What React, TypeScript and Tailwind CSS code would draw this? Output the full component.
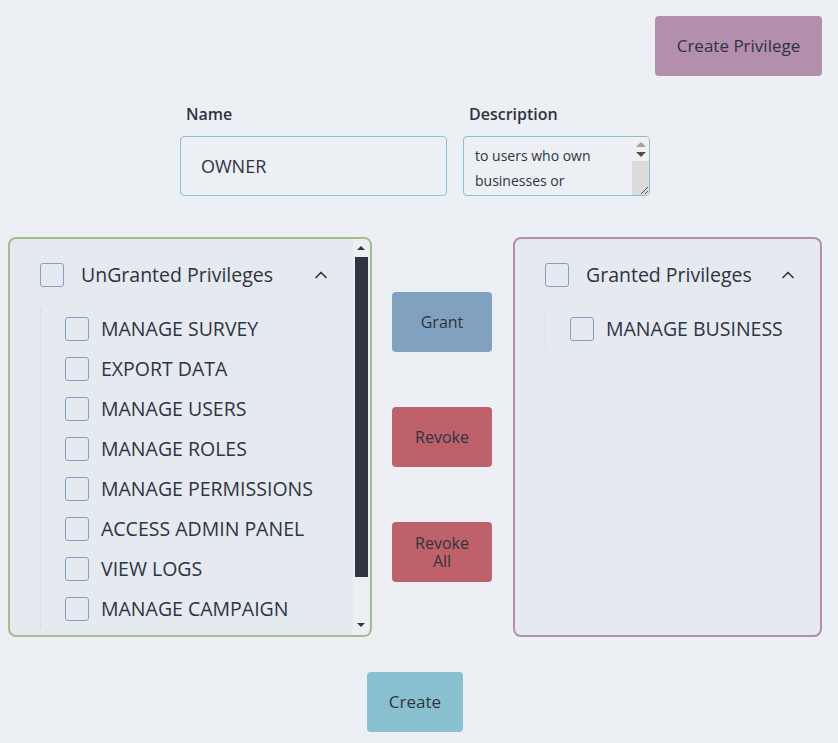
import { ChevronUp } from 'lucide-react';

const ungranted = [
  'MANAGE SURVEY',
  'EXPORT DATA',
  'MANAGE USERS',
  'MANAGE ROLES',
  'MANAGE PERMISSIONS',
  'ACCESS ADMIN PANEL',
  'VIEW LOGS',
  'MANAGE CAMPAIGN',
];

const granted = ['MANAGE BUSINESS'];

function Box() {
  return <span className="block h-6 w-6 shrink-0 rounded-[3px] border border-[#81a1c1] bg-[#e5e9f0]" />;
}

function PrivilegeTree({ title, items }: { title: string; items: string[] }) {
  return (
    <div className="flex-1 pl-[30px] pr-[22px] pt-[22px]">
      <div className="flex h-7 items-center">
        <Box />
        <span className="ml-[17px] flex-1 text-[19.5px] font-medium leading-none">{title}</span>
        <ChevronUp size={20} strokeWidth={2} className="text-[#2e3440]" />
      </div>
      <div className="mt-[20px] border-l border-[#d8dee9] pl-[24px]">
        {items.map((item) => (
          <div key={item} className="flex h-10 items-center">
            <Box />
            <span className="ml-3 text-[19.5px] font-medium leading-none">{item}</span>
          </div>
        ))}
      </div>
    </div>
  );
}

function Scrollbar() {
  return (
    <div className="flex w-4 shrink-0 flex-col items-center bg-[#eceff4]">
      <div className="flex h-[18px] items-center justify-center">
        <span className="border-x-[4px] border-b-[4px] border-x-transparent border-b-[#2e3440]" />
      </div>
      <div className="h-[320px] w-[13px] bg-[#2e3440]" />
      <div className="flex-1" />
      <div className="flex h-[20px] items-center justify-center">
        <span className="border-x-[4px] border-t-[4px] border-x-transparent border-t-[#2e3440]" />
      </div>
    </div>
  );
}

function ActionButton({ label, color }: { label: string; color: string }) {
  return (
    <button className={`flex h-[60px] w-[100px] items-center justify-center rounded-[4px] px-5 text-[16px] font-medium leading-[18px] text-[#2e3440] ${color}`}>
      {label}
    </button>
  );
}

function Description() {
  return (
    <div className="flex h-[60px] w-[187px] overflow-hidden rounded-[4px] border border-[#88c0d0] bg-[#eceff4]">
      <div className="flex-1 pl-[11px] pt-[6px] text-[14px] leading-[25px]">
        <div>to users who own</div>
        <div>businesses or</div>
      </div>
      <div className="flex w-[17px] flex-col bg-[#f0f0f0]">
        <div className="flex h-[10px] items-end justify-center">
          <span className="border-x-[5px] border-b-[5px] border-x-transparent border-b-[#a3a3a3]" />
        </div>
        <div className="flex h-[14px] items-center justify-center">
          <span className="border-x-[5px] border-t-[5px] border-x-transparent border-t-[#505050]" />
        </div>
        <div className="relative flex-1 bg-[#dcdcdc]">
          <svg width="12" height="12" viewBox="0 0 12 12" className="absolute bottom-0 right-0">
            <path d="M11 4 L4 11 M11 8 L8 11" stroke="#505050" strokeWidth="1" />
          </svg>
        </div>
      </div>
    </div>
  );
}

export default function App() {
  return (
    <div className="min-h-[743px] bg-[#eceff4] font-['Open_Sans',sans-serif] text-[#2e3440]">
      <div className="flex justify-end pr-4 pt-4">
        <button className="h-[60px] w-[167px] rounded-[4px] bg-[#b48ead] text-[17px] font-medium text-[#2e3440]">
          Create Privilege
        </button>
      </div>

      <div className="mt-[26px] flex justify-center gap-4 pr-[8px]">
        <div className="flex flex-col">
          <span className="mb-[10px] pl-[6px] text-[16px] font-semibold">Name</span>
          <input
            defaultValue="OWNER"
            className="h-[60px] w-[267px] rounded-[4px] border border-[#88c0d0] bg-[#eceff4] px-5 text-[18px] outline-none"
          />
        </div>
        <div className="flex flex-col">
          <span className="mb-[10px] pl-[6px] text-[16px] font-semibold">Description</span>
          <Description />
        </div>
      </div>

      <div className="mt-[41px] flex items-start pl-2">
        <div className="flex h-[400px] w-[364px] overflow-hidden rounded-[8px] border-2 border-[#a3be8c] bg-[#e5e9f0] pr-[1px]">
          <PrivilegeTree title="UnGranted Privileges" items={ungranted} />
          <Scrollbar />
        </div>

        <div className="ml-5 flex flex-col gap-[55px] pt-[55px]">
          <ActionButton label="Grant" color="bg-[#81a1c1]" />
          <ActionButton label="Revoke" color="bg-[#bf616a]" />
          <ActionButton label="Revoke All" color="bg-[#bf616a]" />
        </div>

        <div className="ml-[21px] flex h-[400px] w-[309px] rounded-[8px] border-2 border-[#b48ead] bg-[#e5e9f0]">
          <PrivilegeTree title="Granted Privileges" items={granted} />
        </div>
      </div>

      <div className="mt-[35px] flex justify-center pr-2">
        <button className="h-[60px] w-[96px] rounded-[4px] bg-[#88c0d0] text-[17px] font-medium text-[#2e3440]">
          Create
        </button>
      </div>
    </div>
  );
}
